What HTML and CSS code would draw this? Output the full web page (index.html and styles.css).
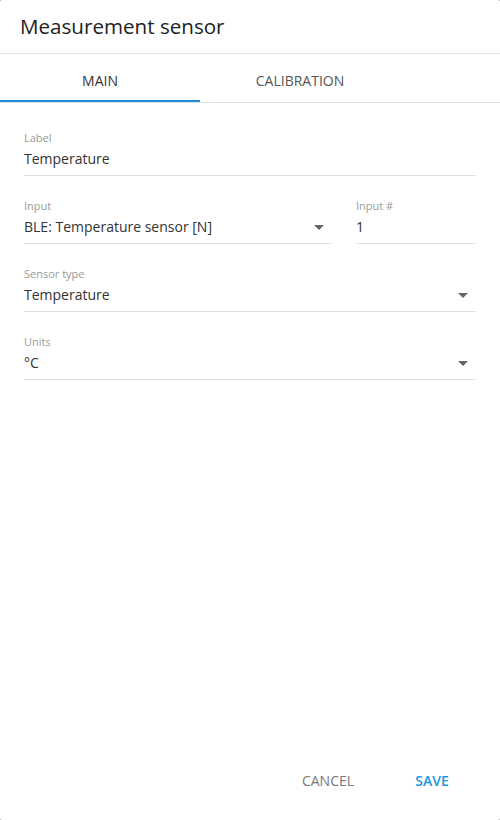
FILE: index.html
```html
<!DOCTYPE html>
<html>
<head>
<meta charset="utf-8">
<link rel="stylesheet" href="styles.css">
</head>
<body>
<div class="dialog">
  <div class="header">Measurement sensor</div>
  <div class="tabs">
    <div class="tab active">MAIN</div>
    <div class="tab">CALIBRATION</div>
  </div>
  <div class="content">
    <div class="field">
      <div class="label">Label</div>
      <div class="value">Temperature</div>
    </div>
    <div class="row">
      <div class="field grow">
        <div class="label">Input</div>
        <div class="value select">BLE: Temperature sensor [N]<span class="arrow"></span></div>
      </div>
      <div class="field small">
        <div class="label">Input #</div>
        <div class="value">1</div>
      </div>
    </div>
    <div class="field">
      <div class="label">Sensor type</div>
      <div class="value select">Temperature<span class="arrow"></span></div>
    </div>
    <div class="field">
      <div class="label">Units</div>
      <div class="value select">°C<span class="arrow"></span></div>
    </div>
  </div>
  <div class="actions">
    <div class="btn cancel">CANCEL</div>
    <div class="btn save">SAVE</div>
  </div>
</div>
</body>
</html>
```
FILE: styles.css
```css
html, body {
  margin: 0;
  padding: 0;
  background: #9e9e9e;
}
body {
  font-family: "Open Sans", "Noto Sans", sans-serif;
  width: 500px;
  height: 820px;
}
.dialog {
  width: 500px;
  height: 820px;
  background: #fff;
  border-radius: 2px;
  display: flex;
  flex-direction: column;
  box-sizing: border-box;
}
.header {
  height: 54px;
  box-sizing: border-box;
  border-bottom: 1px solid #e0e0e0;
  padding: 0 20px;
  font-size: 20.6px;
  line-height: 53px;
  color: #222;
}
.tabs {
  display: flex;
  height: 48px;
  border-bottom: 1px solid #e0e0e0;
}
.tab {
  width: 200px;
  height: 48px;
  padding-top: 2px;
  text-align: center;
  font-size: 14px;
  color: #555;
  line-height: 50px;
  box-sizing: border-box;
  overflow: hidden;
}
.tab.active {
  color: #333;
  border-bottom: 2px solid #1e8fd8;
}
.content {
  flex: 1;
  padding: 24px 24px 0;
  display: flex;
  flex-direction: column;
  gap: 19px;
}
.row {
  display: flex;
  gap: 24px;
}
.grow { flex: 1; }
.small { width: 120px; }
.field {
  border-bottom: 1px solid #e0e0e0;
  height: 49px;
  box-sizing: border-box;
}
.label {
  font-size: 11px;
  color: #9a9a9a;
  line-height: 16px;
  margin-top: 3px;
}
.value {
  font-size: 14px;
  color: #333;
  line-height: 20px;
  margin-top: 3px;
}
.select {
  display: flex;
  justify-content: space-between;
  align-items: center;
}
.arrow {
  width: 0;
  height: 0;
  border-left: 5px solid transparent;
  border-right: 5px solid transparent;
  border-top: 5px solid #666;
  margin-right: 8px;
}
.actions {
  display: flex;
  justify-content: flex-end;
  padding: 0 24px 21px 0;
}
.btn {
  font-size: 14px;
  line-height: 36px;
  padding: 0 16px;
  min-width: 56px;
  text-align: center;
}
.cancel { color: #777; margin-right: 16px; }
.save { color: #2196e0; font-weight: 600; }
```
